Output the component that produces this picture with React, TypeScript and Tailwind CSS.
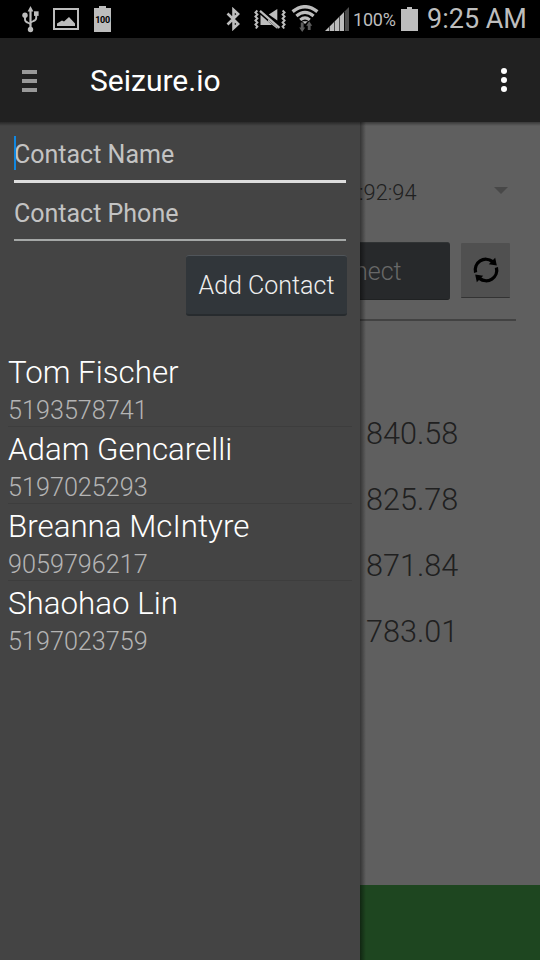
import type { ReactNode } from "react";

interface Contact {
  name: string;
  phone: string;
}

const CONTACTS: Contact[] = [
  { name: "Tom Fischer", phone: "5193578741" },
  { name: "Adam Gencarelli", phone: "5197025293" },
  { name: "Breanna McIntyre", phone: "9059796217" },
  { name: "Shaohao Lin", phone: "5197023759" },
];

const READINGS = ["840.58", "825.78", "871.84", "783.01"];

function UsbIcon() {
  return (
    <svg width="18" height="28" viewBox="0 0 18 28" fill="#bdbdbd" stroke="#bdbdbd" className="ml-[22px] shrink-0">
      <path d="M8.5 1 L5.6 6.5 H11.4 Z" stroke="none" />
      <path d="M8.5 5 V24" strokeWidth="2.2" fill="none" />
      <path d="M3 10 V14.5 Q3 16.5 5.5 17.5 L8.5 19 M14.2 8 V13 Q14.2 15 11.5 16 L8.5 17.5" strokeWidth="1.9" fill="none" />
      <circle cx="3" cy="10.2" r="2.7" stroke="none" />
      <circle cx="8.5" cy="24.5" r="2.7" stroke="none" />
      <rect x="12" y="6.3" width="4.6" height="4.6" stroke="none" />
    </svg>
  );
}

function PictureIcon() {
  return (
    <svg width="26" height="22" viewBox="0 0 26 22" fill="#bdbdbd" className="ml-[13px] shrink-0">
      <rect x="1" y="1" width="24" height="20" fill="none" stroke="#bdbdbd" strokeWidth="2" />
      <path d="M4 18 V15.5 L9 12.5 L11 13.5 L16 9 L22 15.5 V18 Z" />
    </svg>
  );
}

function BluetoothIcon() {
  return (
    <svg width="14" height="24" viewBox="0 0 14 24" fill="none" stroke="#bdbdbd" strokeWidth="2.6" className="shrink-0">
      <path d="M1.5 6.5 L12.2 17 L7.5 21.3 V2.7 L12.2 7 L1.5 17.5" />
    </svg>
  );
}

function VibrateIcon() {
  return (
    <svg width="32" height="24" viewBox="0 0 32 24" fill="#bdbdbd" className="shrink-0">
      <path d="M3.4 3.5 L1.4 5.5 L3.4 7.5 L1.4 9.5 L3.4 11.5 L1.4 13.5 L3.4 15.5 L1.4 17.5 L3.4 19.5 L1.8 21.5" fill="none" stroke="#bdbdbd" strokeWidth="1.9" />
      <path d="M28.6 3.5 L30.6 5.5 L28.6 7.5 L30.6 9.5 L28.6 11.5 L30.6 13.5 L28.6 15.5 L30.6 17.5 L28.6 19.5 L30.2 21.5" fill="none" stroke="#bdbdbd" strokeWidth="1.9" />
      <path d="M6.5 7.8 L18 18 H6.5 Z" />
      <path d="M23.3 2 V13.6 L14.8 7.6 Z" />
      <path d="M6 3.8 L25.5 20.8" stroke="#bdbdbd" strokeWidth="2.2" />
      <path d="M14 14.5 L23.3 22 V20.5 L14 12.5 Z" />
    </svg>
  );
}

function WifiIcon() {
  return (
    <svg width="28" height="28" viewBox="0 0 28 28" fill="none" stroke="#bdbdbd" className="shrink-0">
      <path d="M1.6 6.6 Q14 -3.2 26.4 6.6" strokeWidth="3.4" />
      <path d="M5.4 11 Q14 3.8 22.6 11" strokeWidth="3.2" />
      <path d="M9.2 14.9 Q14 10.8 18.8 14.9" strokeWidth="3" />
      <path d="M11.2 16.2 H16.8 L14 19 Z" fill="#bdbdbd" stroke="none" />
      <path d="M9.8 17.5 H12.6 V22.5 H14.2 L11.2 27 L8.2 22.5 H9.8 Z" fill="#5c5c5c" stroke="none" />
      <path d="M16.8 25 V20.8 H15.2 L18.2 16.2 L21.2 20.8 H19.6 V25 Z" fill="#5c5c5c" stroke="none" />
    </svg>
  );
}

function SignalIcon() {
  return (
    <svg width="24" height="24" viewBox="0 0 24 24" fill="#bdbdbd" className="shrink-0">
      <path d="M0 24 L4 20 V24 Z M4.6 19.4 L9 15 V24 H4.6 Z M9.6 14.4 L14 10 V24 H9.6 Z M14.6 9.4 L19 5 V24 H14.6 Z" />
      <path d="M19.8 4.2 L24 0 V24 H19.8 Z" fill="#4c4c4c" />
    </svg>
  );
}

function RefreshIcon() {
  return (
    <svg width="26" height="26" viewBox="0 0 26 26" fill="none" stroke="#000000" strokeWidth="3.3">
      <path d="M2.6 15.5 A10.6 10.6 0 0 1 19.5 4.6" />
      <path d="M23.4 10.5 A10.6 10.6 0 0 1 6.5 21.4" />
      <path d="M22.2 0.8 L23.8 8.4 L15.8 7.2 Z" fill="#000000" stroke="none" />
      <path d="M3.8 25.2 L2.2 17.6 L10.2 18.8 Z" fill="#000000" stroke="none" />
    </svg>
  );
}

function StatusBar() {
  return (
    <div className="flex h-[38px] items-center bg-black text-[#bdbdbd]">
      <UsbIcon />
      <PictureIcon />
      <div className="ml-[15px] flex h-[26px] w-[17px] shrink-0 flex-col items-center">
        <div className="h-[2px] w-[7px] bg-[#bdbdbd]" />
        <div className="flex h-[24px] w-[17px] items-center justify-center bg-[#bdbdbd] pt-px text-[9px] font-bold tracking-[-0.3px] text-black">
          100
        </div>
      </div>
      <div className="ml-[115px] flex items-center">
        <BluetoothIcon />
        <div className="ml-[14px] flex">
          <VibrateIcon />
        </div>
        <div className="ml-[5px] flex">
          <WifiIcon />
        </div>
        <div className="ml-[6px] flex">
          <SignalIcon />
        </div>
      </div>
      <span className="ml-[4px] w-[44px] pt-[2px] text-[18px] leading-[36px] tracking-[-0.2px] whitespace-nowrap">100%</span>
      <div className="mb-px ml-[4px] flex h-[24px] w-[17px] shrink-0 flex-col items-center">
        <div className="h-[2px] w-[5px] bg-[#bdbdbd]" />
        <div className="h-[22px] w-[17px] bg-[#bdbdbd]" />
      </div>
      <span className="ml-[9px] text-[27px] leading-[38px] whitespace-nowrap">9:25 AM</span>
    </div>
  );
}

function ActionBar() {
  return (
    <header className="flex h-[84px] items-center bg-[#212121] pl-[22px]">
      <div className="flex w-[15px] flex-col gap-[5px] pt-[2px]">
        <div className="h-1 bg-[#999999]" />
        <div className="h-1 bg-[#999999]" />
        <div className="h-1 bg-[#999999]" />
      </div>
      <h1 className="ml-[53px] pt-[2px] text-[30px] leading-[82px] text-white">Seizure.io</h1>
      <div className="mr-[33px] ml-auto flex flex-col gap-[3px]">
        <div className="size-[6px] rounded-full bg-white" />
        <div className="size-[6px] rounded-full bg-white" />
        <div className="size-[6px] rounded-full bg-white" />
      </div>
    </header>
  );
}

function Field({ children, focused }: { children: ReactNode; focused?: boolean }) {
  return (
    <div
      className={
        focused
          ? "relative h-[47px] border-b-[3px] border-[#dedede] text-[#c3c3c3]"
          : "relative mt-[12px] h-[46px] border-b-2 border-[#a5a8a7] text-[#c3c3c3]"
      }
    >
      {focused && <div className="absolute top-0 left-0 h-[34px] w-[2px] bg-[#1087e0]" />}
      <span className="block text-[25px] leading-[37px]">{children}</span>
    </div>
  );
}

function Drawer() {
  return (
    <aside className="h-full w-[360px] shrink-0 bg-[#444444]">
      <div className="px-[14px] pt-[14px]">
        <Field focused>Contact Name</Field>
        <Field>Contact Phone</Field>
        <button className="mt-[14px] -mr-px ml-auto block h-[61px] w-[161px] rounded-[3px] border-t border-b-2 border-t-[#50555a] border-b-[#272b2e] bg-[#31363a] pt-[2px] text-[25px] font-light text-[#eeeeee]">
          Add Contact
        </button>
      </div>
      <ul className="mt-[34px] px-2">
        {CONTACTS.map((c) => (
          <li key={c.phone} className="h-[77px] border-b border-[#3d3d3d] font-light last:border-transparent">
            <div className="pt-px text-[31.3px] leading-[44px] text-white">{c.name}</div>
            <div className="text-[25.2px] leading-[32px] text-[#b4b4b4]">{c.phone}</div>
          </li>
        ))}
      </ul>
    </aside>
  );
}

function MainPane() {
  return (
    <main className="relative flex h-full w-[180px] flex-col overflow-hidden bg-[#5f5f5f] font-light text-[#202020]">
      <div className="flex h-[120px] items-center">
        <span className="-ml-px w-[57px] pt-[22px] text-[21.8px] whitespace-nowrap">:92:94</span>
        <div className="mt-[17px] ml-[78px] h-0 w-0 border-x-[7px] border-t-[7px] border-x-transparent border-t-[#484848]" />
      </div>
      <div className="flex items-start">
        <div className="flex h-[58px] w-[90px] items-center rounded-r-[3px] border-t border-b border-t-[#303334] border-b-[#202223] bg-[#27292b] pt-[2px] text-[25px] text-[#686868]">
          <span className="-ml-[6px]">nect</span>
        </div>
        <div className="mt-px ml-[11px] flex h-[55px] w-[49px] items-center justify-center rounded-[1px] border-b border-[#333333] bg-[#505050]">
          <RefreshIcon />
        </div>
      </div>
      <div className="mt-[19px] mr-6 h-[2px] bg-[#424242]" />
      <div className="mt-[80px] pl-[6px] text-[30.6px]">
        {READINGS.map((r) => (
          <div key={r} className="h-[66px] leading-[66px]">
            {r}
          </div>
        ))}
      </div>
      <div className="mt-auto h-[75px] bg-[#1e4620]" />
      {/* drawer edge shadow */}
      <div className="absolute inset-y-0 left-0 w-[6px] bg-gradient-to-r from-black/45 to-transparent" />
    </main>
  );
}

export default function App() {
  return (
    <div className="flex h-[960px] w-[540px] flex-col overflow-hidden font-['Roboto',sans-serif]">
      <StatusBar />
      <ActionBar />
      <div className="relative flex h-[838px]">
        <Drawer />
        <MainPane />
        <div className="absolute inset-x-0 top-0 h-[4px] bg-gradient-to-b from-black/40 to-transparent" />
      </div>
    </div>
  );
}
